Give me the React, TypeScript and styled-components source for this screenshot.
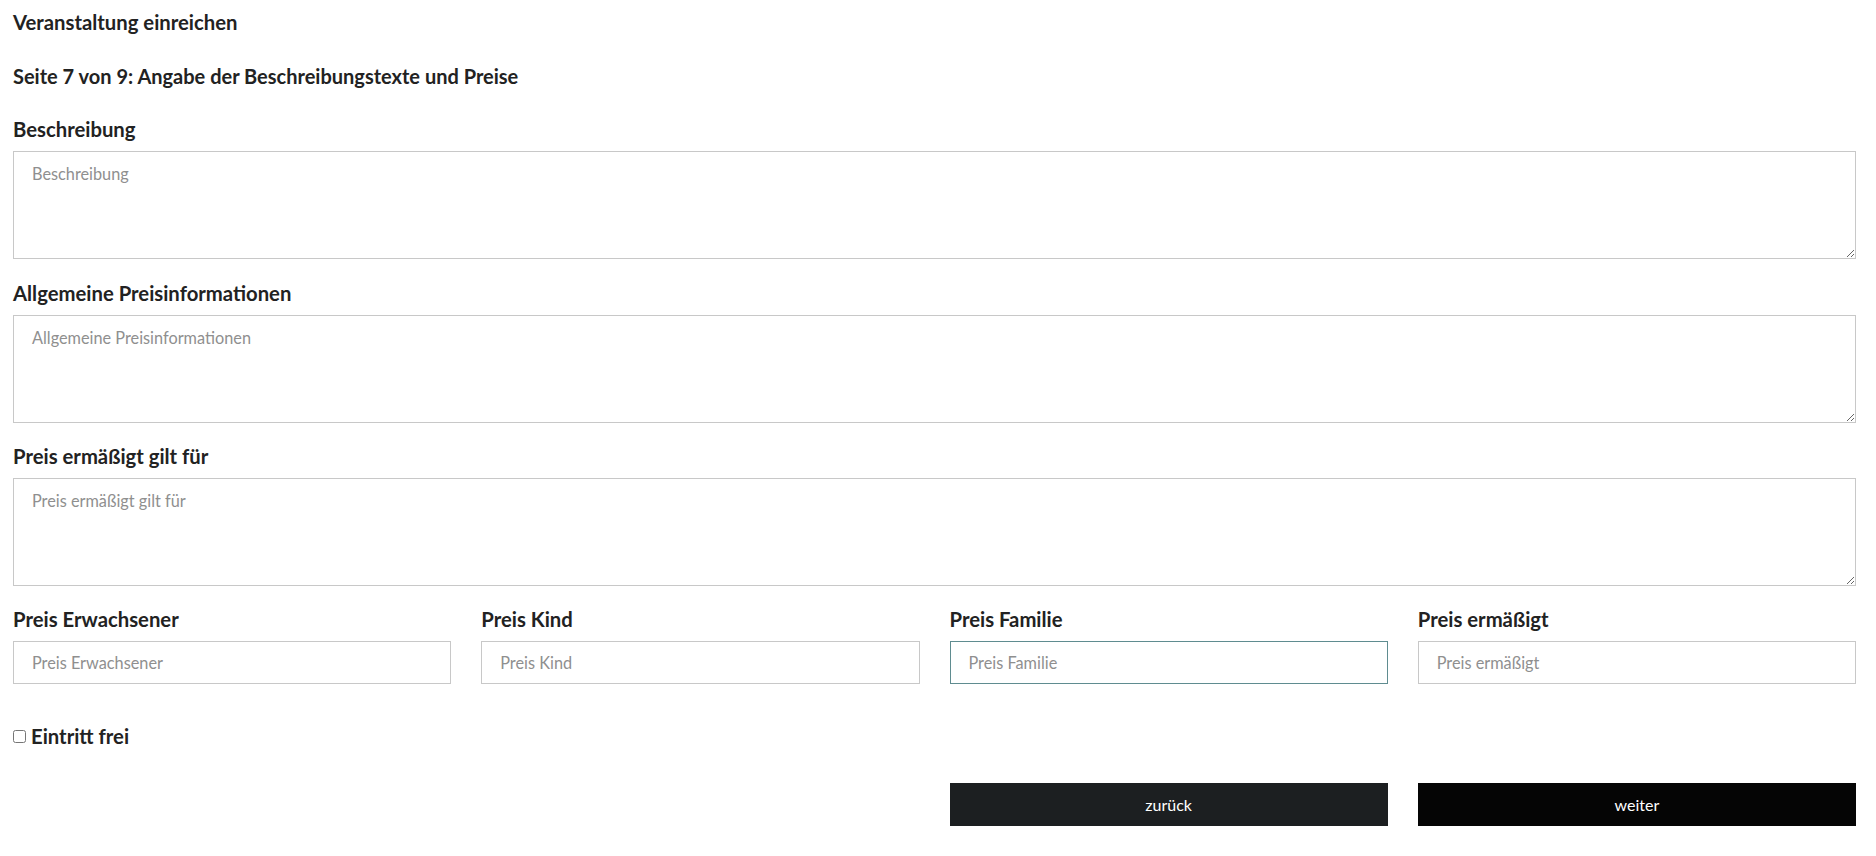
import React from 'react';
import styled, { createGlobalStyle } from 'styled-components';

const GlobalStyle = createGlobalStyle`
  body {
    margin: 0;
    background: #fff;
    font-family: Lato, "Open Sans", sans-serif;
    color: #222;
  }
`;

const textFields = [
    { label: 'Beschreibung' },
    { label: 'Allgemeine Preisinformationen' },
    { label: 'Preis ermäßigt gilt für' },
];

const priceFields = [
    { label: 'Preis Erwachsener' },
    { label: 'Preis Kind' },
    { label: 'Preis Familie', focused: true },
    { label: 'Preis ermäßigt' },
];

const App = () => {
    return (
        <Page>
            <GlobalStyle />
            <Heading>Veranstaltung einreichen</Heading>
            <SubHeading>Seite 7 von 9: Angabe der Beschreibungstexte und Preise</SubHeading>

            {textFields.map((f) => (
                <Group key={f.label}>
                    <Label>{f.label}</Label>
                    <TextArea placeholder={f.label} />
                </Group>
            ))}

            <PriceRow>
                {priceFields.map((f) => (
                    <Col key={f.label}>
                        <Label>{f.label}</Label>
                        <Input placeholder={f.label} $focused={f.focused} />
                    </Col>
                ))}
            </PriceRow>

            <CheckRow>
                <Check type="checkbox" />
                <CheckLabel>Eintritt frei</CheckLabel>
            </CheckRow>

            <ButtonRow>
                <Col />
                <Col />
                <Col>
                    <Button $variant="back">zurück</Button>
                </Col>
                <Col>
                    <Button $variant="next">weiter</Button>
                </Col>
            </ButtonRow>
        </Page>
    );
};

export default App;

const Page = styled.div`
  padding: 10px 20px 20px 13px;
`;

const Heading = styled.div`
  font-size: 20.3px;
  font-weight: 700;
  line-height: 24px;
  margin-bottom: 30px;
`;

const SubHeading = styled(Heading)`
  font-size: 20px;
  margin-bottom: 29px;
`;

const Group = styled.div`
  margin-bottom: 21.5px;
`;

const Label = styled.div`
  font-size: 20.3px;
  font-weight: 700;
  line-height: 24px;
  margin-bottom: 10px;
  color: #222;
`;

const TextArea = styled.textarea`
  display: block;
  box-sizing: border-box;
  width: 100%;
  height: 108px;
  border: 1px solid #c8c8c8;
  border-radius: 0;
  padding: 12px 18px;
  font-family: Lato, sans-serif;
  font-size: 16.3px;
  color: #333;
  resize: vertical;
  outline: none;

  &::placeholder {
    color: #8f8f8f;
  }
`;

const PriceRow = styled.div`
  display: grid;
  grid-template-columns: repeat(4, 1fr);
  column-gap: 30px;
  margin-top: -1px;
`;

const Col = styled.div``;

const Input = styled.input<{ $focused?: boolean }>`
  display: block;
  box-sizing: border-box;
  width: 100%;
  height: 43px;
  border: 1px solid ${(p) => (p.$focused ? '#5f8c90' : '#c8c8c8')};
  border-radius: 0;
  padding: 0 18px;
  font-family: Lato, sans-serif;
  font-size: 16.3px;
  color: #333;
  outline: none;

  &::placeholder {
    color: #8f8f8f;
  }
`;

const CheckRow = styled.label`
  display: flex;
  align-items: center;
  gap: 5px;
  margin-top: 40px;
`;

const Check = styled.input`
  width: 13px;
  height: 13px;
  margin: 2px 0 0 0;
`;

const CheckLabel = styled.span`
  font-size: 20.3px;
  font-weight: 700;
  line-height: 24px;
`;

const ButtonRow = styled(PriceRow)`
  margin-top: 35px;
`;

const Button = styled.button<{ $variant: 'back' | 'next' }>`
  display: block;
  width: 100%;
  height: 43px;
  border: none;
  border-radius: 0;
  background: ${(p) => (p.$variant === 'back' ? '#1c1f21' : '#050505')};
  color: #fff;
  font-family: Lato, sans-serif;
  font-size: 16px;
  cursor: pointer;
`;
